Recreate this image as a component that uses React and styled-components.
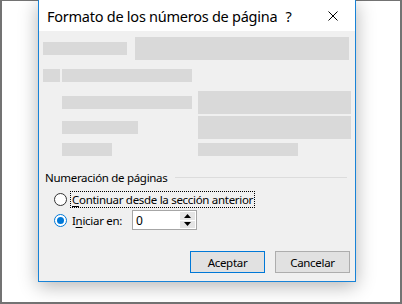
import React from 'react';
import styled, { createGlobalStyle } from 'styled-components';

const Global = createGlobalStyle`
  html, body { margin: 0; padding: 0; background: #fff; }
  body { font-family: "Noto Sans", "Liberation Sans", sans-serif; color: #000; }
  * { box-sizing: border-box; }
`;

const Frame = styled.div`
  width: 402px;
  height: 304px;
  border: 2px solid #737373;
  border-top-width: 1px;
  padding-left: 36px;
  background: #fff;
`;

const Dialog = styled.div`
  position: relative;
  width: 318px;
  height: 282px;
  margin-top: -1px;
  border: 1px solid #1883d7;
  border-top: none;
  background: #f0f0f0;
  box-shadow: 0 4px 18px rgba(0, 0, 0, 0.3);
  display: flex;
  flex-direction: column;
`;

const TitleBar = styled.div`
  height: 31px;
  flex: none;
  background: #fff;
  display: flex;
  align-items: center;
  padding: 0 17px 0 8px;
`;

const Title = styled.span`
  font-size: 14.5px;
  letter-spacing: -0.25px;
  white-space: nowrap;
`;

const Help = styled.span`
  font-size: 14.5px;
  margin-left: 8px;
`;

const Close = styled.span`
  margin-left: auto;
  width: 10px;
  height: 10px;
  display: block;
  svg { display: block; }
`;

const Body = styled.div`
  flex: 1;
  display: flex;
  flex-direction: column;
  padding: 6px 3px 0 4px;
  font-size: 11.5px;
  letter-spacing: -0.3px;
`;

const Row = styled.div`
  display: flex;
  align-items: center;
  gap: ${p => p.$gap ?? 0}px;
  height: ${p => p.$h}px;
  margin-top: ${p => p.$mt ?? 0}px;
`;

const GridRow = styled.div`
  display: grid;
  grid-template-columns: 130px 153px;
  column-gap: 6px;
  align-items: center;
  padding-left: 19px;
  height: ${p => p.$h}px;
  margin-top: ${p => p.$mt ?? 0}px;
`;

const Bar = styled.div`
  width: ${p => p.$w}px;
  height: ${p => p.$h ?? 13}px;
  background: #d9d9d9;
`;

const Section = styled.div`
  display: flex;
  align-items: center;
  height: 15px;
  margin-top: 14px;
  padding-left: 2px;
`;

const SectionLabel = styled.span`
  white-space: nowrap;
`;

const SectionLine = styled.div`
  flex: 1;
  height: 1px;
  background: #dcdcdc;
  margin: 0 5px 0 8px;
`;

const RadioRow = styled.div`
  display: flex;
  align-items: center;
  padding-left: 11px;
  height: ${p => p.$h}px;
  margin-top: ${p => p.$mt}px;
`;

const RadioCircle = styled.span`
  width: 13px;
  height: 13px;
  flex: none;
  border-radius: 50%;
  border: 1px solid ${p => (p.$checked ? '#0078d7' : '#333')};
  background: #fff;
  display: flex;
  align-items: center;
  justify-content: center;
  &::after {
    content: '';
    width: 7px;
    height: 7px;
    border-radius: 50%;
    background: ${p => (p.$checked ? '#0078d7' : 'transparent')};
  }
`;

const RadioLabel = styled.span`
  margin-left: 3px;
  padding: 0 1px;
  white-space: nowrap;
  line-height: 15px;
  border: 1px dotted ${p => (p.$focus ? '#000' : 'transparent')};
  width: ${p => (p.$w ? `${p.$w}px` : 'auto')};
  u { text-decoration: underline; text-underline-offset: 2px; }
`;

const Spin = styled.div`
  width: 65px;
  height: 20px;
  border: 1px solid #a6a6a6;
  background: #fff;
  display: flex;
  align-items: center;
  padding: 1px 1px 1px 3px;
`;

const SpinValue = styled.span`
  flex: 1;
  font-size: 12px;
`;

const SpinButtons = styled.div`
  width: 15px;
  height: 16px;
  display: flex;
  flex-direction: column;
  gap: 1px;
`;

const SpinBtn = styled.div`
  flex: 1;
  background: #e5e5e5;
  display: flex;
  align-items: center;
  justify-content: center;
  svg { display: block; }
`;

const ButtonRow = styled.div`
  display: flex;
  justify-content: flex-end;
  gap: 10px;
  margin-top: 21px;
  padding-right: 2px;
`;

const Button = styled.div`
  width: 75px;
  height: 22px;
  border: 1px solid ${p => (p.$primary ? '#0078d7' : '#adadad')};
  background: #e1e1e1;
  display: flex;
  align-items: center;
  justify-content: center;
`;

export default function App() {
  return (
    <>
      <Global />
      <Frame>
        <Dialog>
          <TitleBar>
            <Title>Formato de los números de página</Title>
            <Help>?</Help>
            <Close>
              <svg width="10" height="10" viewBox="0 0 10 10">
                <path d="M0.5 0.5 L9.5 9.5 M9.5 0.5 L0.5 9.5" stroke="#000" strokeWidth="1" fill="none" />
              </svg>
            </Close>
          </TitleBar>
          <Body>
            <Row $h={23} $gap={8}>
              <Bar $w={84} />
              <Bar $w={214} $h={23} />
            </Row>
            <Row $h={13} $gap={2} $mt={9}>
              <Bar $w={17} />
              <Bar $w={130} />
            </Row>
            <GridRow $h={23} $mt={9}>
              <Bar $w={130} />
              <Bar $w={153} $h={23} />
            </GridRow>
            <GridRow $h={23} $mt={2}>
              <Bar $w={76} />
              <Bar $w={153} $h={23} />
            </GridRow>
            <GridRow $h={13} $mt={4}>
              <Bar $w={50} />
              <Bar $w={100} />
            </GridRow>
            <Section>
              <SectionLabel>Numeración de páginas</SectionLabel>
              <SectionLine />
            </Section>
            <RadioRow $h={18} $mt={5}>
              <RadioCircle />
              <RadioLabel $focus>
                <u>C</u>ontinuar desde la sección anterior
              </RadioLabel>
            </RadioRow>
            <RadioRow $h={20} $mt={2}>
              <RadioCircle $checked />
              <RadioLabel $w={62}>
                I<u>n</u>iciar en:
              </RadioLabel>
              <Spin>
                <SpinValue>0</SpinValue>
                <SpinButtons>
                  <SpinBtn>
                    <svg width="7" height="4" viewBox="0 0 7 4"><path d="M0 4 L3.5 0 L7 4 Z" fill="#000" /></svg>
                  </SpinBtn>
                  <SpinBtn>
                    <svg width="7" height="4" viewBox="0 0 7 4"><path d="M0 0 L3.5 4 L7 0 Z" fill="#000" /></svg>
                  </SpinBtn>
                </SpinButtons>
              </Spin>
            </RadioRow>
            <ButtonRow>
              <Button $primary>Aceptar</Button>
              <Button>Cancelar</Button>
            </ButtonRow>
          </Body>
        </Dialog>
      </Frame>
    </>
  );
}
